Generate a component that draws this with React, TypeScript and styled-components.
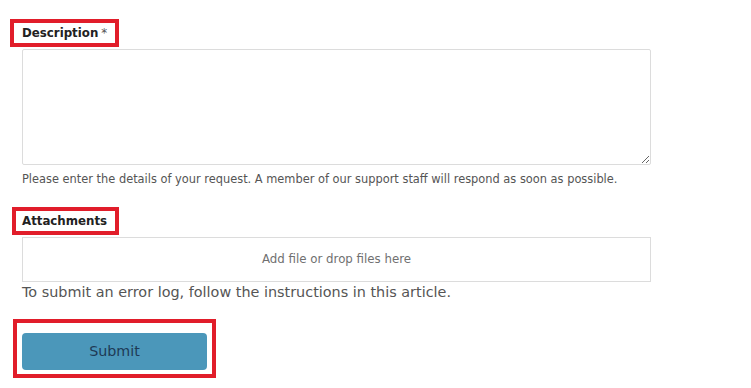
import React from "react";
import styled, { createGlobalStyle } from "styled-components";

const GlobalStyle = createGlobalStyle`
  html, body { margin: 0; padding: 0; background: #ffffff; }
  body { font-family: "DejaVu Sans", "Liberation Sans", sans-serif; color: #333; }
  * { box-sizing: border-box; }
`;

const Form = styled.form`
  display: flex;
  flex-direction: column;
  align-items: flex-start;
  padding: 19px 0 0 10px;
  width: 751px;
`;

const Highlight = styled.div<{ $pad: string; $ml?: number }>`
  display: inline-flex;
  border: 4px solid #e11d2a;
  padding: ${(p) => p.$pad};
  margin-left: ${(p) => p.$ml ?? 0}px;
`;

const Label = styled.label`
  font-size: 11.8px;
  font-weight: 700;
  color: #222;
  line-height: 20px;
  white-space: nowrap;
`;

const Required = styled.span`
  color: #555;
  font-weight: 400;
  margin-left: 3px;
`;

const TextArea = styled.textarea`
  display: block;
  margin: 2px 0 0 12px;
  width: 629px;
  height: 116px;
  border: 1px solid #dcdcdc;
  border-radius: 2px;
  resize: vertical;
  font-family: inherit;
`;

const Hint = styled.p<{ $size: number; $mt: number }>`
  margin: ${(p) => p.$mt}px 0 0 12px;
  font-size: ${(p) => p.$size}px;
  color: #555;
  line-height: 1.3;
  white-space: nowrap;
`;

const DropZone = styled.div`
  margin: 2px 0 0 12px;
  width: 629px;
  height: 45px;
  border: 1px solid #dcdcdc;
  display: flex;
  align-items: center;
  justify-content: center;
  font-size: 11.8px;
  color: #707070;
`;

const Section = styled.div<{ $mt: number }>`
  margin-top: ${(p) => p.$mt}px;
  display: flex;
  flex-direction: column;
  align-items: flex-start;
`;

const SubmitButton = styled.button`
  width: 185px;
  height: 37px;
  border: none;
  border-radius: 4px;
  background: #4b97ba;
  color: #1e3a56;
  font-family: inherit;
  font-size: 14.3px;
`;

export default function App() {
  return (
    <>
      <GlobalStyle />
      <Form onSubmit={(e) => e.preventDefault()}>
        <Highlight $pad="0 8px 0 8px">
          <Label>
            Description<Required>*</Required>
          </Label>
        </Highlight>
        <TextArea />
        <Hint $size={11.4} $mt={7}>
          Please enter the details of your request. A member of our support staff will respond as soon as possible.
        </Hint>
        <Section $mt={20}>
          <Highlight $pad="0 8px 0 6px" $ml={2}>
            <Label>Attachments</Label>
          </Highlight>
          <DropZone>Add file or drop files here</DropZone>
          <Hint $size={14.4} $mt={1}>
            To submit an error log, follow the instructions in this article.
          </Hint>
        </Section>
        <Section $mt={17}>
          <Highlight $pad="10px 5px 4px 5px" $ml={3}>
            <SubmitButton type="submit">Submit</SubmitButton>
          </Highlight>
        </Section>
      </Form>
    </>
  );
}
